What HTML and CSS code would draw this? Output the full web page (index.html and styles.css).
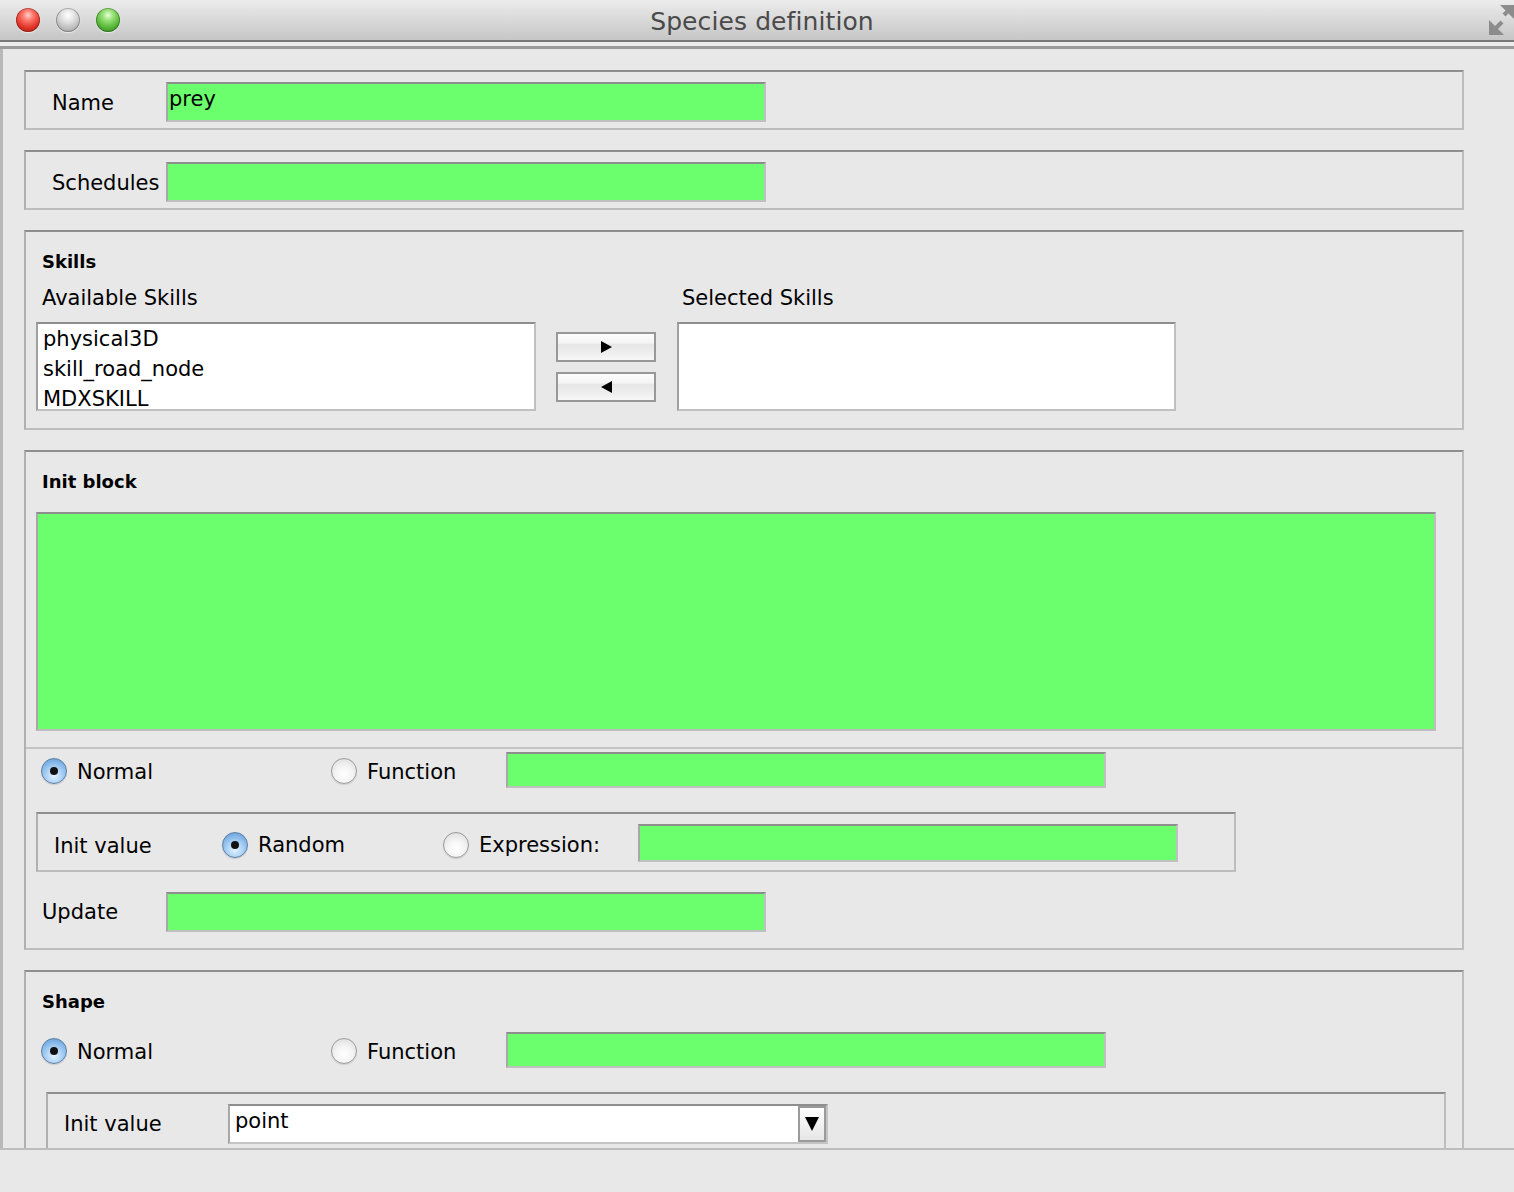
FILE: index.html
```html
<!DOCTYPE html>
<html>
<head>
<meta charset="utf-8">
<title>Species definition</title>
<link rel="stylesheet" href="styles.css">
</head>
<body>
<div class="titlebar">
  <div class="lights">
    <span class="light red"></span>
    <span class="light gray"></span>
    <span class="light green"></span>
  </div>
  <div class="title">Species definition</div>
  <div class="tb-right">
    <svg class="resize" width="28" height="40" viewBox="0 0 28 40">
      <polygon points="3,20 3,35 18,35" fill="#8c8c8c"/>
      <line x1="8" y1="30" x2="16" y2="22" stroke="#8c8c8c" stroke-width="4"/>
      <polygon points="14,5 28,5 28,19" fill="#8c8c8c"/>
      <line x1="23" y1="10" x2="18" y2="15" stroke="#8c8c8c" stroke-width="4"/>
    </svg>
  </div>
</div>
<div class="sep"></div>
<div class="viewport">
  <div class="content">
    <section class="panel row-panel">
      <div class="row-label">Name</div>
      <div class="field w600 h40 txt">prey</div>
    </section>

    <section class="panel row-panel">
      <div class="row-label">Schedules</div>
      <div class="field w600 h40"></div>
    </section>

    <section class="panel skills-panel">
      <div class="hdr skills-hdr">Skills</div>
      <div class="skills-labels">
        <div class="col-left sub-lbl">Available Skills</div>
        <div class="col-mid"></div>
        <div class="col-right sub-lbl">Selected Skills</div>
      </div>
      <div class="skills-lists">
        <div class="list col-left">
          <div class="item">physical3D</div>
          <div class="item">skill_road_node</div>
          <div class="item">MDXSKILL</div>
        </div>
        <div class="col-mid btns">
          <div class="arrow-btn"><span class="tri tri-right"></span></div>
          <div class="arrow-btn"><span class="tri tri-left"></span></div>
        </div>
        <div class="list col-right"></div>
      </div>
    </section>

    <section class="panel init-panel">
      <div class="hdr">Init block</div>
      <div class="field textarea"></div>
      <div class="hline"></div>
      <div class="radio-row">
        <div class="opt opt-normal"><span class="radio on"></span><span class="opt-text">Normal</span></div>
        <div class="opt opt-function"><span class="radio"></span><span class="opt-text">Function</span></div>
        <div class="field w600 h36"></div>
      </div>
      <div class="subpanel initval">
        <div class="iv-label">Init value</div>
        <div class="opt opt-random"><span class="radio on"></span><span class="opt-text">Random</span></div>
        <div class="opt opt-expr"><span class="radio"></span><span class="opt-text">Expression:</span></div>
        <div class="field w540 h38"></div>
      </div>
      <div class="update-row">
        <div class="upd-label">Update</div>
        <div class="field w600 h40"></div>
      </div>
    </section>

    <section class="panel shape-panel">
      <div class="hdr">Shape</div>
      <div class="radio-row">
        <div class="opt opt-normal"><span class="radio on"></span><span class="opt-text">Normal</span></div>
        <div class="opt opt-function"><span class="radio"></span><span class="opt-text">Function</span></div>
        <div class="field w600 h36"></div>
      </div>
      <div class="subpanel shape-init">
        <div class="iv-label shape-iv">Init value</div>
        <div class="combo">
          <span class="combo-text">point</span>
          <span class="combo-btn"><span class="tri tri-down"></span></span>
        </div>
      </div>
    </section>
  </div>
</div>
<div class="footer"></div>
</body>
</html>
```

FILE: styles.css
```css
* { box-sizing: border-box; }
html, body { margin: 0; padding: 0; }
body {
  width: 1514px;
  height: 1192px;
  overflow: hidden;
  background: #e8e8e8;
  font-family: "DejaVu Sans", "Liberation Sans", sans-serif;
  font-size: 21px;
  color: #000;
}

/* ---------- title bar ---------- */
.titlebar {
  height: 42px;
  border-bottom: 2px solid #787878;
  background: linear-gradient(#ececec, #d9d9d9 50%, #c6c6c6);
  display: flex;
  align-items: center;
}
.lights {
  width: 130px;
  display: flex;
  gap: 16px;
  padding-left: 16px;
}
.light {
  width: 24px;
  height: 24px;
  border-radius: 50%;
  box-shadow: 0 1px 1px rgba(255,255,255,0.7), inset 0 0 0 1px rgba(0,0,0,0.25);
}
.light.red {
  background: radial-gradient(circle at 50% 30%, #ffd2cc 0, #ff7a6e 25%, #e2352b 60%, #a3150d 100%);
}
.light.gray {
  background: radial-gradient(circle at 50% 30%, #ffffff 0, #e4e4e4 30%, #bdbdbd 65%, #8f8f8f 100%);
}
.light.green {
  background: radial-gradient(circle at 50% 30%, #e6ffd6 0, #9be27a 25%, #57b738 60%, #2d7a14 100%);
}
.title {
  flex: 1;
  text-align: center;
  font-size: 25px;
  line-height: 40px;
  padding-top: 3px;
  color: #4a4a4a;
  letter-spacing: 0.1px;
}
.tb-right {
  width: 120px;
  height: 40px;
  display: flex;
  justify-content: flex-end;
}
.resize { display: block; }

.sep {
  height: 7px;
  background: #ececec;
  border-bottom: 3px solid #9b9b9b;
}

/* ---------- viewport ---------- */
.viewport {
  height: 1099px;
  border-left: 3px solid #b9b9b9;
  overflow: hidden;
  padding: 21px 0 0 21px;
}
.content {
  display: flex;
  flex-direction: column;
  gap: 20px;
}
.footer {
  height: 44px;
  border-top: 2px solid #bdbdbd;
  background: #e8e8e8;
}

/* ---------- panels ---------- */
.panel, .subpanel {
  border: 2px solid #bdbdbd;
  border-top-color: #8e8e8e;
  border-left-color: #b0b0b0;
}
.panel { width: 1440px; flex: none; }

.row-panel {
  height: 60px;
  display: flex;
  align-items: flex-start;
  padding-top: 10px;
}
.row-label {
  width: 140px;
  padding-left: 26px;
  line-height: 40px;
  padding-top: 1px;
}

/* fields */
.field {
  background: #6bff6e;
  border: 2px solid #c0c0c0;
  border-top-color: #8e8e8e;
  border-left-color: #a8a8a8;
  padding: 0 1px;
  line-height: 26px;
  flex: none;
}
.field.txt { padding-top: 2px; }
.w600 { width: 600px; }
.w540 { width: 540px; }
.h40 { height: 40px; }
.h38 { height: 38px; }
.h36 { height: 36px; }

.hdr {
  font-weight: bold;
  font-size: 18px;
  line-height: 24px;
  padding-left: 16px;
  margin-top: 18px;
}
.skills-hdr { padding-left: 6px; }

/* ---------- skills ---------- */
.skills-panel {
  height: 200px;
  padding-left: 10px;
}
.skills-labels, .skills-lists {
  display: flex;
}
.skills-labels {
  margin-top: 9px;
  height: 30px;
  line-height: 30px;
}
.skills-lists { margin-top: 9px; }
.col-left { width: 500px; flex: none; }
.col-mid { width: 100px; margin: 0 21px 0 20px; flex: none; }
.col-right { width: 499px; flex: none; }
.sub-lbl { padding-left: 6px; }
.skills-labels .col-right { padding-left: 5px; }
.list {
  height: 89px;
  background: #fff;
  border: 2px solid #c0c0c0;
  border-top-color: #8e8e8e;
  border-left-color: #a0a0a0;
  overflow: hidden;
  padding-left: 5px;
}
.item { line-height: 30px; white-space: nowrap; }
.btns {
  padding-top: 10px;
  display: flex;
  flex-direction: column;
  gap: 10px;
}
.arrow-btn {
  height: 30px;
  border: 2px solid #989898;
  background: linear-gradient(#fcfcfc, #f4f4f4 35%, #e6e6e6 40%, #f0f0f0 80%, #f7f7f7);
  display: flex;
  align-items: center;
  justify-content: center;
}
.tri { width: 0; height: 0; display: block; }
.tri-right {
  border-top: 6px solid transparent;
  border-bottom: 6px solid transparent;
  border-left: 11px solid #000;
}
.tri-left {
  border-top: 6px solid transparent;
  border-bottom: 6px solid transparent;
  border-right: 11px solid #000;
}
.tri-down {
  border-left: 7px solid transparent;
  border-right: 7px solid transparent;
  border-top: 14px solid #000;
}

/* ---------- init block ---------- */
.init-panel {
  height: 500px;
}
.textarea {
  width: 1400px;
  height: 219px;
  margin: 18px 0 0 10px;
  border-right-color: #bdbdbd;
  border-bottom-color: #bdbdbd;
}
.hline {
  height: 2px;
  background: #c4c4c4;
  margin-top: 16px;
}
.radio-row {
  display: flex;
  align-items: center;
  margin-top: 3px;
  padding-left: 15px;
}
.opt {
  display: flex;
  align-items: center;
  gap: 10px;
  flex: none;
  line-height: 30px;
}
.opt-text { padding-top: 4px; }
.opt-normal { width: 290px; }
.opt-function { width: 175px; }
.radio {
  width: 26px;
  height: 26px;
  border-radius: 50%;
  flex: none;
  border: 1px solid #9a9a9a;
  background: radial-gradient(circle at 50% 65%, #ffffff 0, #f3f3f3 45%, #d6d6d6 100%);
  box-shadow: 0 1px 1px rgba(0,0,0,0.12);
  position: relative;
  margin-top: 1px;
}
.radio.on {
  border-color: #5e7fa6;
  background: radial-gradient(circle at 50% 70%, #e4f2ff 0, #a9d1f5 40%, #6aa3dc 85%, #4f86c2 100%);
}
.radio.on::after {
  content: "";
  position: absolute;
  left: 50%;
  top: 50%;
  width: 8px;
  height: 8px;
  margin: -4px 0 0 -4px;
  border-radius: 50%;
  background: #111;
}

.initval {
  width: 1200px;
  height: 60px;
  margin: 24px 0 0 10px;
  display: flex;
  align-items: flex-start;
  padding: 10px 0 0 16px;
}
.initval .opt, .initval .iv-label { height: 38px; }
.iv-label { width: 168px; flex: none; line-height: 38px; padding-top: 3px; }
.opt-random { width: 221px; }
.opt-expr { width: 195px; }
.initval .radio { margin-top: 3px; }

.update-row {
  display: flex;
  align-items: center;
  margin-top: 20px;
  padding-left: 16px;
}
.upd-label { width: 124px; flex: none; }

/* ---------- shape ---------- */
.shape-panel { height: 300px; }
.shape-panel .radio-row { margin-top: 18px; }
.shape-init {
  width: 1400px;
  height: 120px;
  margin: 24px 0 0 20px;
  display: flex;
  align-items: flex-start;
  padding: 10px 0 0 16px;
}
.shape-iv {
  width: 164px;
  line-height: 40px;
  padding-top: 0;
}
.combo {
  width: 600px;
  height: 40px;
  flex: none;
  background: #fff;
  border: 2px solid #c4c4c4;
  border-top-color: #8e8e8e;
  border-left-color: #a8a8a8;
  display: flex;
  align-items: flex-start;
  justify-content: space-between;
}
.combo-text {
  padding: 2px 0 0 5px;
  line-height: 26px;
}
.combo-btn {
  width: 28px;
  height: 36px;
  margin-right: 0;
  border: 2px solid #9a9a9a;
  background: linear-gradient(#fdfdfd, #f2f2f2 50%, #e6e6e6);
  display: flex;
  align-items: center;
  justify-content: center;
}
```
